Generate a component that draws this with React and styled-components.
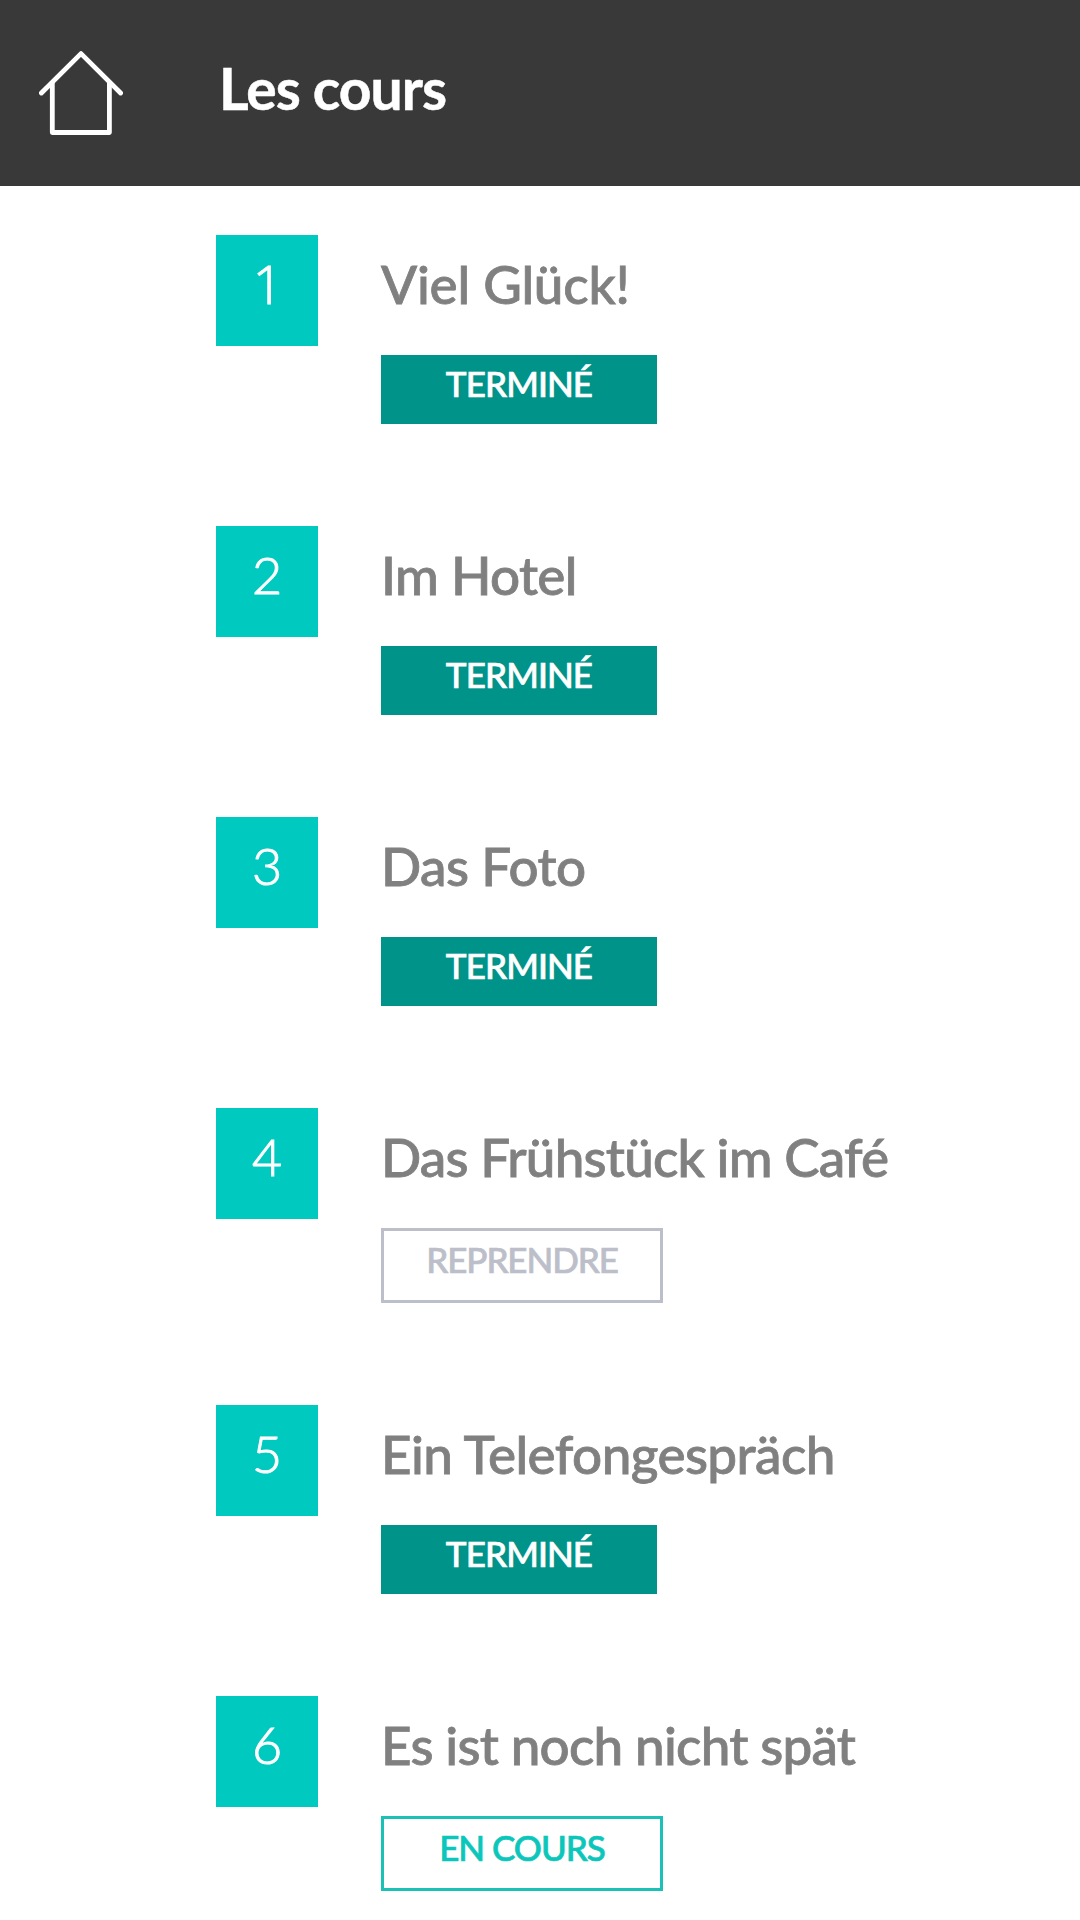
import styled, { createGlobalStyle } from "styled-components";

const lessons = [
    { id: 1, title: "Viel Glück!", status: "done", tracking: -0.2 },
    { id: 2, title: "Im Hotel", status: "done", tracking: -0.65 },
    { id: 3, title: "Das Foto", status: "done", tracking: -0.55 },
    { id: 4, title: "Das Frühstück im Café", status: "resume", tracking: -0.8 },
    { id: 5, title: "Ein Telefongespräch", status: "done", tracking: -0.57 },
    { id: 6, title: "Es ist noch nicht spät", status: "current", tracking: -0.77 },
];

const statuses = {
    done: { label: "TERMINÉ", color: "#fff", background: "#009389", border: "none", tracking: -0.9 },
    resume: { label: "REPRENDRE", color: "#bcbfc9", background: "#fff", border: "3px solid #bcbfc9", tracking: -1.1 },
    current: { label: "EN COURS", color: "#0bc6ba", background: "#fff", border: "3px solid #1bc0b7", tracking: -1 },
};

const HomeIcon = () => (
    <svg width="84" height="84" viewBox="0 0 84 84" fill="none" stroke="#fff" strokeWidth="4.8" strokeLinejoin="round">
        <path d="M13.3 32V81.5H70.4V32" />
        <path d="M2.4 42L42 2.6L81.6 42" strokeLinecap="round" />
    </svg>
);

const Lesson = ({ lesson }) => {
    const status = statuses[lesson.status];

    return (
        <LessonRow>
            <LessonNumber $footless={lesson.id === 1}>{lesson.id}</LessonNumber>
            <LessonDetails>
                <LessonTitle $tracking={lesson.tracking}>{lesson.title}</LessonTitle>
                <StatusButton $status={status}>{status.label}</StatusButton>
            </LessonDetails>
        </LessonRow>
    );
};

const App = () => {
    return (
        <Screen>
            <GlobalStyle />
            <Header>
                <HomeButton aria-label="Accueil"><HomeIcon /></HomeButton>
                <PageTitle>Les cours</PageTitle>
            </Header>
            <LessonList>
                {lessons.map((lesson) => <Lesson key={lesson.id} lesson={lesson} />)}
            </LessonList>
        </Screen>
    );
};

const GlobalStyle = createGlobalStyle`
    * {
        box-sizing: border-box;
    }
    body {
        margin: 0;
        background: #fff;
        font-family: Lato, "Open Sans", sans-serif;
    }
`;

const Screen = styled.div`
    height: 1920px;
    overflow: hidden;
    background: #fff;
`;

const Header = styled.header`
    display: flex;
    align-items: flex-start;
    gap: 96px;
    height: 186px;
    padding-left: 39px;
    background: #393939;
`;

const HomeButton = styled.button`
    display: block;
    width: 84px;
    height: 84px;
    margin-top: 51px;
    padding: 0;
    border: none;
    background: none;
    cursor: pointer;

    svg {
        display: block;
    }
`;

const PageTitle = styled.h1`
    margin: 0;
    color: #fff;
    font-size: 57px;
    font-weight: 700;
    letter-spacing: -0.95px;
    line-height: 177px;
    white-space: nowrap;
    -webkit-text-stroke: 0.5px currentColor;
`;

const LessonList = styled.ul`
    display: flex;
    flex-direction: column;
    gap: 102px;
    margin: 0;
    padding: 49px 0 0 216px;
    list-style: none;
`;

const LessonRow = styled.li`
    display: flex;
    align-items: flex-start;
    gap: 63px;
`;

/* Lato draws its 1 with a foot, so that digit comes from Open Sans */
const LessonNumber = styled.div`
    width: 102px;
    height: 111px;
    padding-left: ${({ $footless }) => $footless ? "2px" : 0};
    background: #00cabf;
    color: #fff;
    font-family: ${({ $footless }) => $footless ? '"Open Sans", sans-serif' : "Lato, sans-serif"};
    font-size: ${({ $footless }) => $footless ? "53px" : "52px"};
    font-weight: 300;
    line-height: 97px;
    text-align: center;
    -webkit-text-stroke: 1px currentColor;
`;

const LessonDetails = styled.div`
    display: flex;
    flex-direction: column;
    align-items: flex-start;
`;

const LessonTitle = styled.h2`
    height: 120px;
    margin: 0;
    color: #808080;
    font-size: 53px;
    font-weight: 500;
    letter-spacing: ${({ $tracking }) => $tracking}px;
    line-height: 97px;
    white-space: nowrap;
    -webkit-text-stroke: 0.8px currentColor;
`;

const StatusButton = styled.button`
    box-sizing: content-box;
    display: flex;
    align-items: flex-start;
    justify-content: center;
    width: 276px;
    height: 69px;
    padding: 0;
    border: ${({ $status }) => $status.border};
    background: ${({ $status }) => $status.background};
    color: ${({ $status }) => $status.color};
    font-family: inherit;
    font-size: 35px;
    font-weight: 500;
    letter-spacing: ${({ $status }) => $status.tracking}px;
    line-height: 57px;
    cursor: pointer;
    -webkit-text-stroke: 0.7px currentColor;
`;

export default App;
